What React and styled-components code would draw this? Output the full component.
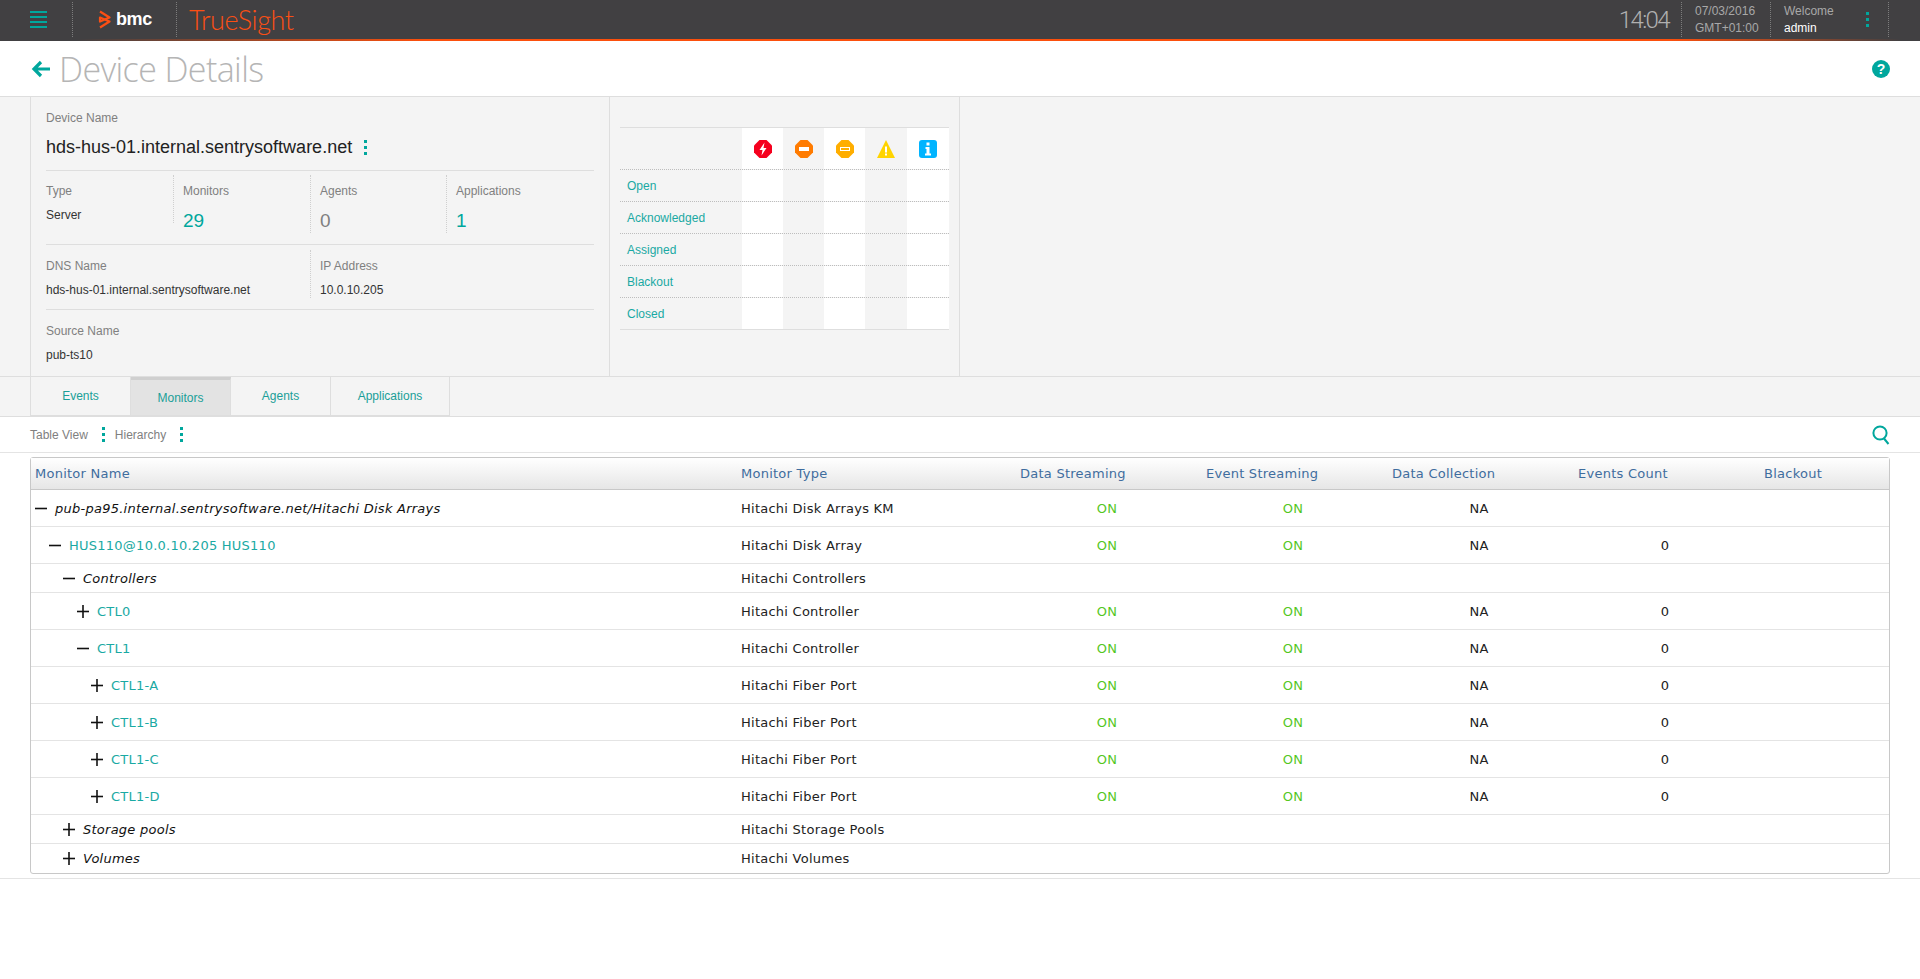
import React from "react";
import styled, { createGlobalStyle } from "styled-components";

const GlobalStyle = createGlobalStyle`
  html, body {
    margin: 0;
    padding: 0;
    background: #fff;
    font-family: "Liberation Sans", Arial, sans-serif;
    font-size: 12px;
    color: #222;
  }
  * {
    box-sizing: border-box;
  }
`;

const TEAL = "#00a79d";

const TopBar = styled.header`
  display: flex;
  height: 39px;
  background: #414042;
  align-items: stretch;
`;

const AccentLine = styled.div`
  height: 2px;
  background: linear-gradient(90deg, #414042 4%, #fb4f0c 22%, #fb4f0c 87%, #414042 99%);
`;

const BarCell = styled.div`
  display: flex;
  align-items: center;
  width: ${(p) => p.$width}px;
  padding-left: ${(p) => p.$pad}px;
  margin: 2px 0;
  border-right: ${(p) => (p.$plain ? "0" : "1px dotted #7d7d7d")};
`;

const Hamburger = styled.span`
  display: block;
  width: 17px;
  height: 17px;
  background: repeating-linear-gradient(180deg, ${TEAL} 0, ${TEAL} 2px, transparent 2px, transparent 5px);
`;

const BmcMark = styled.span`
  font-size: 18px;
  font-weight: 700;
  color: #fff;
  letter-spacing: -0.4px;
  margin-left: 5px;
`;

const ProductName = styled.span`
  font-family: "Lato", sans-serif;
  font-size: 27px;
  font-weight: 300;
  color: #fb4f14;
  letter-spacing: -0.4px;
`;

const Spacer = styled.div`
  flex: 1;
`;

const Clock = styled.div`
  font-family: "Roboto", sans-serif;
  font-weight: 300;
  font-size: 24px;
  letter-spacing: -1.6px;
  color: #b0b0b0;
  display: flex;
  align-items: center;
  padding-right: 12px;
  margin: 2px 0;
  border-right: 1px dotted #7d7d7d;
`;

const BarText = styled.div`
  line-height: 17px;
  color: ${(p) => (p.$bright ? "#fff" : "#a8a8a8")};
`;

const Stack = styled.div`
  display: flex;
  flex-direction: column;
`;

const Dots = styled.span`
  display: inline-block;
  flex: none;
  width: 3px;
  height: 3px;
  margin: 6px 0;
  background: ${TEAL};
  box-shadow: 0 -6px 0 ${TEAL}, 0 6px 0 ${TEAL};
`;

const MenuDots = styled(Dots)`
  margin-left: 32px;
`;

const TitleRow = styled.div`
  display: flex;
  align-items: center;
  height: 56px;
  padding: 0 30px 0 31px;
  border-bottom: 1px solid #dedede;
`;

const PageTitle = styled.h1`
  margin: 0 0 0 9px;
  font-family: "Open Sans", sans-serif;
  font-size: 34px;
  font-weight: 300;
  letter-spacing: -0.6px;
  color: #b5b5b5;
  flex: 1;
`;

const HelpBadge = styled.span`
  width: 18px;
  height: 18px;
  border-radius: 50%;
  background: ${TEAL};
  color: #fff;
  font-size: 14px;
  font-weight: 700;
  line-height: 18px;
  text-align: center;
`;

const Details = styled.section`
  display: flex;
  height: 280px;
  padding-left: 30px;
  background: #f4f4f4;
  border-bottom: 1px solid #dedede;
`;

const InfoPanel = styled.div`
  width: 580px;
  padding: 0 15px;
  border-left: 1px solid #dedede;
  border-right: 1px solid #dedede;
`;

const NameBlock = styled.div`
  height: 74px;
  padding-top: 14px;
  border-bottom: 1px solid #dedede;
`;

const Label = styled.div`
  line-height: 14px;
  color: #808080;
`;

const DeviceName = styled.div`
  display: flex;
  align-items: center;
  gap: 12px;
  margin-top: 10px;
  font-size: 18px;
  line-height: 24px;
  color: #222;
`;

const FieldRow = styled.div`
  display: grid;
  grid-template-columns: ${(p) => p.$columns};
  align-items: start;
  padding-top: ${(p) => p.$top}px;
  height: ${(p) => p.$height}px;
  border-bottom: ${(p) => (p.$last ? "0" : "1px solid #dedede")};
`;

const Field = styled.div`
  height: ${(p) => p.$height}px;
  padding-top: ${(p) => p.$pad}px;
  padding-left: ${(p) => (p.$first ? 0 : 9)}px;
  border-right: ${(p) => (p.$divider ? "1px dotted #cfcfcf" : "0")};
`;

const FieldValue = styled.div`
  margin-top: 10px;
  line-height: 14px;
  color: #333;
`;

const BigNumber = styled.div`
  margin-top: 11px;
  font-size: 19px;
  line-height: 24px;
  color: ${(p) => (p.$muted ? "#808080" : TEAL)};
`;

const EventPanel = styled.div`
  width: 350px;
  padding: 30px 10px 0;
  border-right: 1px solid #dedede;
`;

const EventTable = styled.div`
  border-top: 1px solid #dedede;
`;

const EventRow = styled.div`
  display: grid;
  grid-template-columns: 122px 41px 41px 41px 42px 42px;
  height: ${(p) => (p.$head ? 42 : 32)}px;
  border-bottom: 1px ${(p) => (p.$last ? "solid #dedede" : "dotted #bdbdbd")};
`;

const EventLabel = styled.div`
  display: flex;
  align-items: center;
  padding-left: 7px;
  color: #1aa9a3;
`;

const EventCell = styled.div`
  display: flex;
  align-items: center;
  justify-content: center;
  background: ${(p) => (p.$shade ? "#f4f4f4" : "#fff")};
`;

const TabStrip = styled.nav`
  display: flex;
  height: 40px;
  padding-left: 30px;
  background: #f4f4f4;
  border-bottom: 1px solid #dedede;
`;

const Tab = styled.div`
  display: flex;
  align-items: center;
  justify-content: center;
  width: ${(p) => p.$width}px;
  height: 39px;
  border-right: 1px solid #dedede;
  border-left: ${(p) => (p.$first ? "1px solid #dedede" : "0")};
  border-bottom: 1px solid #dedede;
  border-top: ${(p) => (p.$active ? "3px solid #cfcfcf" : "0")};
  background: ${(p) => (p.$active ? "#e3e3e3" : "transparent")};
  color: #1a9f98;
`;

const Toolbar = styled.div`
  display: flex;
  align-items: center;
  height: 36px;
  padding: 0 30px;
  border-bottom: 1px solid #e4e4e4;
  color: #808080;
`;

const ViewLabel = styled.span`
  margin-right: 11px;
`;

const ViewDots = styled(Dots)`
  margin-right: 10px;
  margin-left: 3px;
`;

const SearchButton = styled.span`
  display: flex;
  margin-left: auto;
`;

const TableArea = styled.div`
  padding: 4px 30px;
  border-bottom: 1px solid #e4e4e4;
`;

const DataTable = styled.div`
  border: 1px solid #c8c8c8;
  border-radius: 3px;
  font-family: "DejaVu Sans", sans-serif;
  font-size: 13px;
  letter-spacing: 0.25px;
`;

const Row = styled.div`
  display: grid;
  grid-template-columns: 704px 279px repeat(4, 186px) 1fr;
  align-items: center;
  height: ${(p) => p.$height}px;
  border-bottom: ${(p) => (p.$last ? "0" : "1px solid #e4e4e4")};
`;

const HeadRow = styled(Row)`
  background: linear-gradient(180deg, #fff 0%, #e6e6e6 100%);
  border-bottom: 1px solid #c8c8c8;
  color: #3f6d9e;
`;

const HeadCell = styled.div`
  padding-left: ${(p) => (p.$first ? 4 : 6)}px;
`;

const NameCell = styled.div`
  display: flex;
  align-items: center;
  gap: 8px;
  padding-left: ${(p) => 4 + p.$level * 14}px;
`;

const NameText = styled.span`
  font-style: ${(p) => (p.$group ? "italic" : "normal")};
  color: ${(p) => (p.$group ? "#111" : "#1aa9a3")};
`;

const TypeCell = styled.div`
  padding-left: 6px;
  color: #222;
`;

const ValueCell = styled.div`
  text-align: center;
  color: ${(p) => (p.$on ? "#55c71f" : "#222")};
`;

const ToggleIcon = ({ open }) => (
  <svg width="12" height="13" viewBox="0 0 12 13" aria-hidden="true">
    <path d="M0 6.5h12" stroke="#111" strokeWidth="1.6" />
    {!open && <path d="M6 0v13" stroke="#111" strokeWidth="1.6" />}
  </svg>
);

const BackArrow = () => (
  <svg width="19" height="18" viewBox="0 0 19 18" aria-hidden="true">
    <path d="M19 9H3M10 2 3 9l7 7" fill="none" stroke={TEAL} strokeWidth="3.2" />
  </svg>
);

const SearchIcon = () => (
  <svg width="18" height="20" viewBox="0 0 18 20" aria-hidden="true">
    <circle cx="8" cy="8" r="6.6" fill="none" stroke={TEAL} strokeWidth="2" />
    <path d="M12 13.5 16.5 19" stroke={TEAL} strokeWidth="2" />
  </svg>
);

const BmcLogo = () => (
  <svg width="13" height="19" viewBox="0 0 13 19" aria-hidden="true">
    <path
      d="M2 1.5 11.5 7.5 2 11.5V7.5L11.5 11.5 2 17.5"
      fill="none"
      stroke="#fb4f14"
      strokeWidth="2.2"
      strokeLinejoin="round"
    />
  </svg>
);

const Critical = () => (
  <svg width="18" height="18" viewBox="0 0 18 18" aria-hidden="true">
    <path d="M5.5 0h7L18 5.5v7L12.500 18h-7L0 12.500v-7z" fill="#f5001e" />
    <path d="M10.500 2.500 5.500 10h3l-1 5.500 5-7.500h-3z" fill="#fff" />
  </svg>
);

const Major = () => (
  <svg width="18" height="18" viewBox="0 0 18 18" aria-hidden="true">
    <path d="M5.500 0h7L18 5.500v7L12.500 18h-7L0 12.500v-7z" fill="#ff7b00" />
    <rect x="4" y="7" width="10" height="4" fill="#fff" />
  </svg>
);

const Minor = () => (
  <svg width="18" height="18" viewBox="0 0 18 18" aria-hidden="true">
    <path d="M5.500 0h7L18 5.500v7L12.500 18h-7L0 12.500v-7z" fill="#ffae00" />
    <rect x="4.500" y="7.500" width="9" height="3" fill="none" stroke="#fff" />
  </svg>
);

const Warning = () => (
  <svg width="18" height="18" viewBox="0 0 18 18" aria-hidden="true">
    <path d="M9 0l9 18H0z" fill="#ffd400" />
    <rect x="8" y="6.500" width="2" height="6" fill="#fff" />
    <rect x="8" y="13.500" width="2" height="2" fill="#fff" />
  </svg>
);

const Info = () => (
  <svg width="18" height="18" viewBox="0 0 18 18" aria-hidden="true">
    <rect width="18" height="18" rx="3" fill="#00b4ff" />
    <rect x="7.500" y="2.500" width="3" height="3" fill="#fff" />
    <path d="M6.500 7h4v6.500h1.500V15.500h-6v-2h1.500V9h-1z" fill="#fff" />
  </svg>
);

const severities = [Critical, Major, Minor, Warning, Info];
const eventStates = ["Open", "Acknowledged", "Assigned", "Blackout", "Closed"];

const tabs = [
  { label: "Events", width: 101 },
  { label: "Monitors", width: 100, active: true },
  { label: "Agents", width: 100 },
  { label: "Applications", width: 119 },
];

const columns = ["Monitor Name", "Monitor Type", "Data Streaming", "Event Streaming", "Data Collection", "Events Count", "Blackout"];

const monitors = [
  { name: "pub-pa95.internal.sentrysoftware.net/Hitachi Disk Arrays", type: "Hitachi Disk Arrays KM", level: 0, open: true, group: true, stream: true },
  { name: "HUS110@10.0.10.205 HUS110", type: "Hitachi Disk Array", level: 1, open: true, stream: true, count: "0" },
  { name: "Controllers", type: "Hitachi Controllers", level: 2, open: true, group: true, short: true },
  { name: "CTL0", type: "Hitachi Controller", level: 3, stream: true, count: "0" },
  { name: "CTL1", type: "Hitachi Controller", level: 3, open: true, stream: true, count: "0" },
  { name: "CTL1-A", type: "Hitachi Fiber Port", level: 4, stream: true, count: "0" },
  { name: "CTL1-B", type: "Hitachi Fiber Port", level: 4, stream: true, count: "0" },
  { name: "CTL1-C", type: "Hitachi Fiber Port", level: 4, stream: true, count: "0" },
  { name: "CTL1-D", type: "Hitachi Fiber Port", level: 4, stream: true, count: "0" },
  { name: "Storage pools", type: "Hitachi Storage Pools", level: 2, group: true, short: true },
  { name: "Volumes", type: "Hitachi Volumes", level: 2, group: true, short: true },
];

export default function App() {
  return (
    <>
      <GlobalStyle />
      <TopBar>
        <BarCell $width={73} $pad={30}>
          <Hamburger />
        </BarCell>
        <BarCell $width={104} $pad={25}>
          <BmcLogo />
          <BmcMark>bmc</BmcMark>
        </BarCell>
        <BarCell $width={120} $pad={12} $plain>
          <ProductName>TrueSight</ProductName>
        </BarCell>
        <Spacer />
        <Clock>14:04</Clock>
        <BarCell $width={89} $pad={13}>
          <Stack>
            <BarText>07/03/2016</BarText>
            <BarText>GMT+01:00</BarText>
          </Stack>
        </BarCell>
        <BarCell $width={118} $pad={13}>
          <Stack>
            <BarText>Welcome</BarText>
            <BarText $bright>admin</BarText>
          </Stack>
          <MenuDots />
        </BarCell>
        <BarCell $width={31} $pad={0} $plain />
      </TopBar>
      <AccentLine />

      <TitleRow>
        <BackArrow />
        <PageTitle>Device Details</PageTitle>
        <HelpBadge>?</HelpBadge>
      </TitleRow>

      <Details>
        <InfoPanel>
          <NameBlock>
            <Label>Device Name</Label>
            <DeviceName>
              hds-hus-01.internal.sentrysoftware.net
              <Dots />
            </DeviceName>
          </NameBlock>
          <FieldRow $columns="128px 137px 136px 1fr" $top={4} $height={74}>
            <Field $first $divider $height={48} $pad={9}>
              <Label>Type</Label>
              <FieldValue>Server</FieldValue>
            </Field>
            <Field $divider $height={58} $pad={9}>
              <Label>Monitors</Label>
              <BigNumber>29</BigNumber>
            </Field>
            <Field $divider $height={58} $pad={9}>
              <Label>Agents</Label>
              <BigNumber $muted>0</BigNumber>
            </Field>
            <Field $height={58} $pad={9}>
              <Label>Applications</Label>
              <BigNumber>1</BigNumber>
            </Field>
          </FieldRow>
          <FieldRow $columns="265px 1fr" $top={5} $height={65}>
            <Field $first $divider $height={48} $pad={9}>
              <Label>DNS Name</Label>
              <FieldValue>hds-hus-01.internal.sentrysoftware.net</FieldValue>
            </Field>
            <Field $height={48} $pad={9}>
              <Label>IP Address</Label>
              <FieldValue>10.0.10.205</FieldValue>
            </Field>
          </FieldRow>
          <FieldRow $columns="1fr" $top={14} $height={60} $last>
            <Field $first $pad={0}>
              <Label>Source Name</Label>
              <FieldValue>pub-ts10</FieldValue>
            </Field>
          </FieldRow>
        </InfoPanel>

        <EventPanel>
          <EventTable>
            <EventRow $head>
              <div />
              {severities.map((Icon, i) => (
                <EventCell key={i} $shade={i % 2 === 1}>
                  <Icon />
                </EventCell>
              ))}
            </EventRow>
            {eventStates.map((state, r) => (
              <EventRow key={state} $last={r === eventStates.length - 1}>
                <EventLabel>{state}</EventLabel>
                {severities.map((_, i) => (
                  <EventCell key={i} $shade={i % 2 === 1} />
                ))}
              </EventRow>
            ))}
          </EventTable>
        </EventPanel>
      </Details>

      <TabStrip>
        {tabs.map((tab, i) => (
          <Tab key={tab.label} $width={tab.width} $active={tab.active} $first={i === 0}>
            {tab.label}
          </Tab>
        ))}
      </TabStrip>

      <Toolbar>
        <ViewLabel>Table View</ViewLabel>
        <ViewDots />
        <ViewLabel>Hierarchy</ViewLabel>
        <ViewDots />
        <SearchButton>
          <SearchIcon />
        </SearchButton>
      </Toolbar>

      <TableArea>
        <DataTable>
          <HeadRow $height={32}>
            {columns.map((col, i) => (
              <HeadCell key={col} $first={i === 0}>
                {col}
              </HeadCell>
            ))}
          </HeadRow>
          {monitors.map((m, i) => (
            <Row key={m.name} $height={m.short ? 29 : 37} $last={i === monitors.length - 1}>
              <NameCell $level={m.level}>
                <ToggleIcon open={m.open} />
                <NameText $group={m.group}>{m.name}</NameText>
              </NameCell>
              <TypeCell>{m.type}</TypeCell>
              <ValueCell $on>{m.stream ? "ON" : ""}</ValueCell>
              <ValueCell $on>{m.stream ? "ON" : ""}</ValueCell>
              <ValueCell>{m.stream ? "NA" : ""}</ValueCell>
              <ValueCell>{m.count}</ValueCell>
              <ValueCell />
            </Row>
          ))}
        </DataTable>
      </TableArea>
    </>
  );
}
